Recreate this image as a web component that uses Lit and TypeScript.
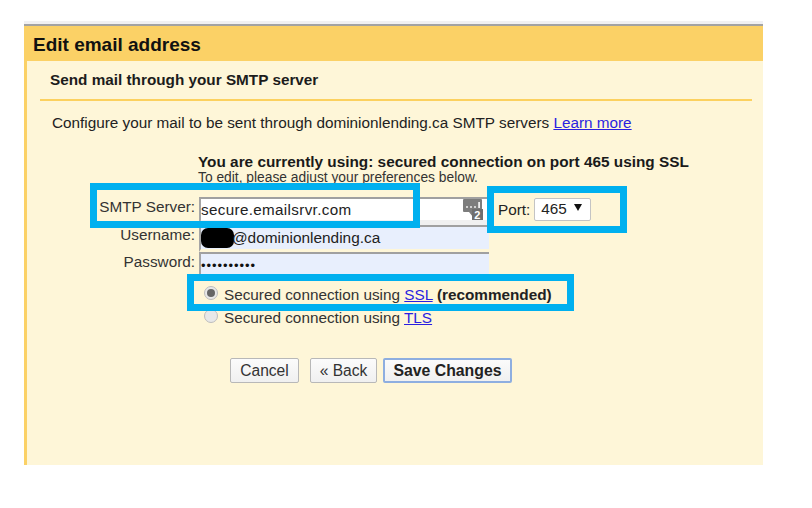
import { LitElement, html, css } from "lit";
import { customElement } from "lit/decorators.js";

@customElement("app-root")
export class AppRoot extends LitElement {
  static styles = css`
    :host {
      display: block;
      position: relative;
      width: 812px;
      height: 508px;
      background: #fff;
      overflow: hidden;
      font-family: "Liberation Sans", Arial, sans-serif;
      color: #222;
      font-size: 15.3px;
    }
    .page { padding: 21px 49px 0 24px; height: 444px; display: flex; flex-direction: column; }
    .topbar { height: 3px; background: #f1f1f3; flex: none; }
    .rule { height: 2px; background: #a3a3a3; flex: none; }
    .dialog { flex: 1; display: flex; flex-direction: column; background: #fbd166; padding: 1px 0 0 3px; }
    .head { height: 34px; flex: none; display: flex; align-items: center; padding: 2px 0 0 6px; box-sizing: border-box; font-size: 19px; font-weight: 700; color: #111; }
    .body { flex: 1; background: #fef6d8; display: flex; flex-direction: column; }
    .sub { height: 38px; flex: none; margin: 0 11px 0 13px; border-bottom: 2px solid #fcd15f; display: flex; align-items: center; padding-left: 10px; font-size: 15.3px; font-weight: 700; color: #1c1c1c; }
    .intro { margin-top: 13px; padding-left: 25px; line-height: 17px; font-size: 15.3px; }
    a { color: #2a1fe0; text-decoration: underline; }
    .status { margin: 22px 0 0 171px; }
    .status b { display: block; line-height: 17px; font-size: 15.35px; color: #1a1a1a; }
    .status span { display: block; line-height: 13px; font-size: 13.8px; color: #333; margin-top: 1px; }
    .form { margin-top: 13px; display: grid; grid-template-columns: 168px 290px auto; column-gap: 4px; grid-template-rows: 28px 27px 22px; }
    .label { text-align: right; line-height: 18px; padding-top: 1px; font-size: 15.3px; color: #333; }
    .field { border-top: 2px solid #a0a0a0; border-left: 2px solid #a5a5a5; box-sizing: border-box; display: flex; align-items: center; color: #222; }
    .white { background: #fff; justify-content: space-between; padding-right: 6px; border-bottom: 5px solid #f0f0f0; font-size: 15.2px; letter-spacing: 0.35px; }
    .tint { background: #e8effd; font-size: 15.4px; }
    .user { border-bottom: 3px solid #fef6d8; }
    .blob { width: 33px; height: 20px; background: #000; border-radius: 7px; margin-right: -2px; flex: none; }
    .dots { font-size: 13px; letter-spacing: 0.95px; color: #111; padding-top: 3px; }
    .port { display: flex; align-items: center; gap: 4px; padding: 0 0 0 5px; height: 26px; font-size: 15.3px; }
    .select { width: 57px; height: 23px; box-sizing: border-box; background: #fff; border: 1px solid #c4c4c4; border-radius: 2px; display: flex; align-items: center; justify-content: space-between; padding: 0 8px 0 6px; font-size: 15.3px; color: #222; margin-top: -2px; }
    .select i { width: 0; height: 0; border-left: 4px solid transparent; border-right: 4px solid transparent; border-top: 7px solid #111; margin-top: -3px; }
    .radios { margin: 12px 0 0 177px; display: flex; flex-direction: column; gap: 6px; }
    .radio { display: flex; align-items: center; gap: 6px; line-height: 17px; font-size: 15.3px; color: #333; }
    .dot { width: 14px; height: 14px; box-sizing: border-box; border-radius: 50%; border: 1px solid #bdbdbd; background: #e8e8e8; display: flex; align-items: center; justify-content: center; flex: none; margin-top: -4px; }
    .dot.on::after { content: ""; width: 8px; height: 8px; border-radius: 50%; background: #666; }
    .radio b { color: #222; }
    .actions { margin: 32px 0 0 203px; display: flex; }
    button { font: inherit; font-size: 15.6px; height: 25px; box-sizing: border-box; padding: 1px 0 0; background: linear-gradient(#fbfbfb, #f0f0f0); border: 1px solid #b8b8b8; border-radius: 2px; color: #333; }
    .cancel { width: 69px; margin-right: 11px; }
    .back { width: 67px; margin-right: 6px; }
    .save { width: 129px; font-weight: 700; color: #222; font-size: 15.8px; border: 2px solid #8eaee0; }
    .mark { position: absolute; border: 7px solid #00b0ef; box-sizing: border-box; pointer-events: none; }
    .m1 { left: 90px; top: 183px; width: 330px; height: 45px; }
    .m2 { left: 487px; top: 186px; width: 140px; height: 47px; }
    .m3 { left: 187px; top: 274px; width: 387px; height: 37px; }
    .icon { overflow: visible; }
  `;

  render() {
    return html`
      <div class="page">
        <div class="topbar"></div>
        <div class="rule"></div>
        <div class="dialog">
          <div class="head">Edit email address</div>
          <div class="body">
            <div class="sub">Send mail through your SMTP server</div>
            <div class="intro">Configure your mail to be sent through dominionlending.ca SMTP servers <a>Learn more</a></div>
            <div class="status">
              <b>You are currently using: secured connection on port 465 using SSL</b>
              <span>To edit, please adjust your preferences below.</span>
            </div>
            <div class="form">
              <div class="label">SMTP Server:</div>
              <div class="field white">
                <span>secure.emailsrvr.com</span>
                <svg class="icon" width="20" height="21" viewBox="0 0 20 21">
                  <path d="M1 0h17a1 1 0 0 1 1 1v12H10v5l-4-5H1a1 1 0 0 1-1-1V1a1 1 0 0 1 1-1z" fill="#7d7d7d"/>
                  <circle cx="4" cy="8" r="1" fill="#eee"/><circle cx="8" cy="8" r="1" fill="#eee"/><circle cx="12" cy="8" r="1" fill="#eee"/>
                  <rect x="15.2" y="3" width="1.8" height="6" fill="#eee"/>
                  <rect x="9" y="10" width="11" height="11" fill="#6f6f6f"/>
                  <text x="14.5" y="19.5" text-anchor="middle" font-size="11" font-weight="700" font-family="Liberation Sans" fill="#fff">2</text>
                </svg>
              </div>
              <div class="port">Port: <div class="select">465 <i></i></div></div>
              <div class="label">Username:</div>
              <div class="field tint user"><span class="blob"></span><span>@dominionlending.ca</span></div>
              <div></div>
              <div class="label">Password:</div>
              <div class="field tint"><span class="dots">••••••••••</span></div>
              <div></div>
            </div>
            <div class="radios">
              <div class="radio"><span class="dot on"></span><span>Secured connection using <a>SSL</a> <b>(recommended)</b></span></div>
              <div class="radio"><span class="dot"></span><span>Secured connection using <a>TLS</a></span></div>
            </div>
            <div class="actions">
              <button class="cancel">Cancel</button>
              <button class="back">« Back</button>
              <button class="save">Save Changes</button>
            </div>
          </div>
        </div>
      </div>
      <div class="mark m1"></div>
      <div class="mark m2"></div>
      <div class="mark m3"></div>
    `;
  }
}
